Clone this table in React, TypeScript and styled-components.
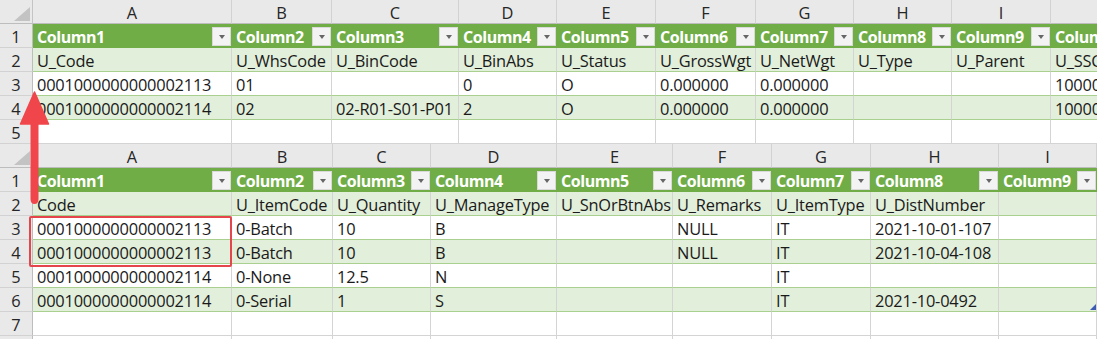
import styled, { createGlobalStyle } from "styled-components";

const GlobalStyle = createGlobalStyle`
  html, body {
    margin: 0;
    padding: 0;
    background: #ffffff;
  }
  body {
    font-family: "Open Sans", "Noto Sans", Arial, sans-serif;
    color: #1f1f1f;
  }
  * {
    box-sizing: border-box;
  }
`;

const Page = styled.div`
  position: relative;
  width: 1097px;
  height: 339px;
  overflow: hidden;
  background: #fff;
`;

const Sheet = styled.div<{ $cols: number[]; $rows: number }>`
  display: grid;
  grid-template-columns: 33px ${(p) => p.$cols.map((c) => `${c}px`).join(" ")};
  grid-template-rows: repeat(${(p) => p.$rows}, 24px);
  width: 1097px;
  height: ${(p) => p.$rows * 24}px;
  overflow: hidden;
  font-size: 16.4px;
`;

const Corner = styled.div`
  display: flex;
  align-items: flex-end;
  justify-content: flex-end;
  padding: 0 2px 2px 0;
  background: #e9e9e9;
  border-right: 1px solid #c4c4c4;
  border-bottom: 1px solid #bdbdbd;
`;

const ColHead = styled.div`
  display: flex;
  align-items: center;
  justify-content: center;
  padding-top: 1px;
  background: #e9e9e9;
  border-right: 1px solid #d2d2d2;
  border-bottom: 1px solid #bdbdbd;
  color: #262626;
  font-size: 16.4px;
  white-space: nowrap;
  overflow: hidden;
`;

const RowHead = styled.div`
  display: flex;
  align-items: center;
  justify-content: center;
  padding-top: 2px;
  background: #e9e9e9;
  border-right: 1px solid #bdbdbd;
  border-bottom: 1px solid #d2d2d2;
  color: #262626;
`;

const HeadCell = styled.div`
  display: flex;
  align-items: center;
  justify-content: space-between;
  padding: 1px 1px 0 4px;
  background: #70ad47;
  color: #ffffff;
  font-weight: 700;
  font-size: 16px;
  letter-spacing: -0.45px;
  white-space: nowrap;
  overflow: hidden;
`;

const Cell = styled.div<{ $band?: boolean; $table?: boolean }>`
  display: flex;
  align-items: center;
  padding: 2px 0 0 4px;
  background: ${(p) => (p.$band ? "#e2efda" : "#ffffff")};
  border-right: 1px solid #d4d4d4;
  border-bottom: 1px solid ${(p) => (p.$table ? "#a9d08e" : "#d4d4d4")};
  white-space: nowrap;
  overflow: hidden;
  letter-spacing: -0.2px;
  color: #1a1a1a;
`;

const FilterButton = styled.span`
  flex: none;
  display: flex;
  align-items: center;
  justify-content: center;
  width: 19px;
  height: 19px;
  margin-left: 4px;
  background: #f3f3f3;
  border: 1px solid #d9d9d9;
  &::after {
    content: "";
    border-left: 3.5px solid transparent;
    border-right: 3.5px solid transparent;
    border-top: 4px solid #666666;
  }
`;

const Handle = styled.span`
  margin-left: auto;
  align-self: flex-end;
  margin-bottom: 1px;
  width: 6px;
  height: 6px;
  background: #3e5bb4;
  clip-path: polygon(100% 0, 100% 100%, 0 100%);
`;

const Highlight = styled.div`
  position: absolute;
  left: 29px;
  top: 216px;
  width: 203px;
  height: 51px;
  border: 2.5px solid #e4464b;
  border-radius: 2px;
`;

const ArrowLayer = styled.svg`
  position: absolute;
  left: 0;
  top: 0;
`;

type SheetData = {
  cols: number[];
  letters: string[];
  headers: string[];
  body: string[][];
  totalRows: number;
  handle?: boolean;
};

const top: SheetData = {
  cols: [199, 100, 127, 98, 99, 100, 98, 98, 99, 110],
  letters: ["A", "B", "C", "D", "E", "F", "G", "H", "I", "J"],
  headers: [
    "Column1",
    "Column2",
    "Column3",
    "Column4",
    "Column5",
    "Column6",
    "Column7",
    "Column8",
    "Column9",
    "Column10",
  ],
  body: [
    ["U_Code", "U_WhsCode", "U_BinCode", "U_BinAbs", "U_Status", "U_GrossWgt", "U_NetWgt", "U_Type", "U_Parent", "U_SSCC"],
    ["0001000000000002113", "01", "", "0", "O", "0.000000", "0.000000", "", "", "1000000000"],
    ["0001000000000002114", "02", "02-R01-S01-P01", "2", "O", "0.000000", "0.000000", "", "", "1000000000"],
  ],
  totalRows: 6,
};

const bottom: SheetData = {
  cols: [199, 101, 98, 126, 116, 99, 99, 128, 98],
  letters: ["A", "B", "C", "D", "E", "F", "G", "H", "I"],
  headers: [
    "Column1",
    "Column2",
    "Column3",
    "Column4",
    "Column5",
    "Column6",
    "Column7",
    "Column8",
    "Column9",
  ],
  body: [
    ["Code", "U_ItemCode", "U_Quantity", "U_ManageType", "U_SnOrBtnAbs", "U_Remarks", "U_ItemType", "U_DistNumber", ""],
    ["0001000000000002113", "0-Batch", "10", "B", "", "NULL", "IT", "2021-10-01-107", ""],
    ["0001000000000002113", "0-Batch", "10", "B", "", "NULL", "IT", "2021-10-04-108", ""],
    ["0001000000000002114", "0-None", "12.5", "N", "", "", "IT", "", ""],
    ["0001000000000002114", "0-Serial", "1", "S", "", "", "IT", "2021-10-0492", ""],
  ],
  totalRows: 9,
  handle: true,
};

const CornerMark = () => (
  <svg width="16" height="14" viewBox="0 0 16 14">
    <polygon points="16,0 16,14 0,14" fill="#c3c3c3" />
  </svg>
);

const Grid = ({ data }: { data: SheetData }) => {
  const rowCount = data.totalRows;
  const lastBody = data.body.length;
  return (
    <Sheet $cols={data.cols} $rows={rowCount}>
      <Corner>
        <CornerMark />
      </Corner>
      {data.letters.map((l) => (
        <ColHead key={l}>{l}</ColHead>
      ))}

      {/* table header row */}
      <RowHead>1</RowHead>
      {data.headers.map((h) => (
        <HeadCell key={h}>
          {h}
          <FilterButton />
        </HeadCell>
      ))}

      {/* table body */}
      {data.body.map((row, r) => (
        <>
          <RowHead key={`rh${r}`}>{r + 2}</RowHead>
          {row.map((v, c) => (
            <Cell key={`c${r}-${c}`} $band={r % 2 === 0} $table>
              {v}
              {data.handle && r === lastBody - 1 && c === row.length - 1 && <Handle />}
            </Cell>
          ))}
        </>
      ))}

      {/* empty rows below the table */}
      {Array.from({ length: rowCount - lastBody - 2 }).map((_, i) => (
        <>
          <RowHead key={`er${i}`}>{lastBody + 2 + i}</RowHead>
          {data.cols.map((_, c) => (
            <Cell key={`e${i}-${c}`} />
          ))}
        </>
      ))}
    </Sheet>
  );
};

const Arrow = () => (
  <ArrowLayer width="60" height="210" viewBox="0 0 60 210">
    <path
      d="M30.5 122 L38.5 122 L38.5 199 Q38.5 204 34.5 204 Q30.5 204 30.5 199 Z"
      fill="#f0464b"
    />
    <polygon
      points="34.5,92 48.5,124 20.5,124"
      fill="#f0464b"
      stroke="#f0464b"
      strokeWidth="1.5"
      strokeLinejoin="round"
    />
  </ArrowLayer>
);

const App = () => {
  return (
    <Page>
      <GlobalStyle />
      <Grid data={top} />
      <Grid data={bottom} />
      <Highlight />
      <Arrow />
    </Page>
  );
};

export default App;
